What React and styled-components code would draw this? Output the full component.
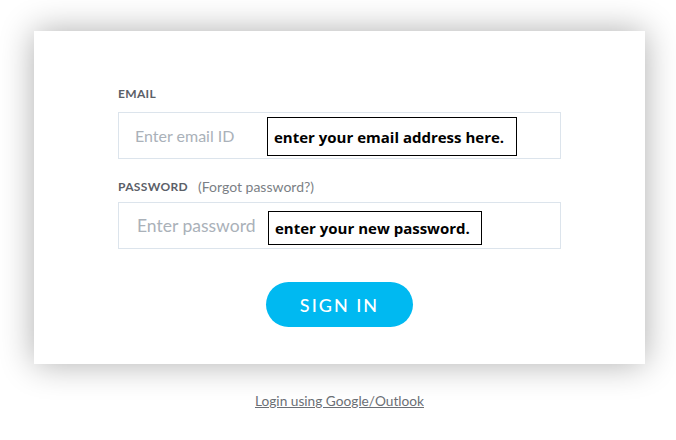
import React from "react";
import styled, { createGlobalStyle } from "styled-components";

const Global = createGlobalStyle`
  body {
    margin: 0;
    background: #fff;
    font-family: "Nunito", Lato, "Noto Sans", sans-serif;
  }
`;

const Page = styled.div`
  padding: 31px 0 0 34px;
  width: 611px;
`;

const Card = styled.div`
  width: 611px;
  height: 333px;
  box-sizing: border-box;
  padding: 52px 84px 0;
  background: #fff;
  box-shadow: 0 0 32px rgba(0, 0, 0, 0.32);
  display: flex;
  flex-direction: column;
`;

const Field = styled.div`
  display: flex;
  flex-direction: column;
  margin-top: ${(p) => p.$top || 0}px;
`;

const LabelRow = styled.div`
  display: flex;
  align-items: center;
  gap: 10px;
  height: 20px;
  margin-bottom: ${(p) => p.$gap}px;
`;

const Label = styled.span`
  font-family: Lato, "Noto Sans", sans-serif;
  font-size: 12px;
  font-weight: 700;
  color: #5b6068;
  letter-spacing: 0.35px;
`;

const Hint = styled.span`
  font-family: Lato, "Noto Sans", sans-serif;
  font-size: 14px;
  color: #7b7f85;
`;

const InputBox = styled.div`
  position: relative;
  height: 47px;
  box-sizing: border-box;
  border: 1px solid #dce4ec;
`;

const Input = styled.input`
  width: 100%;
  height: 100%;
  box-sizing: border-box;
  border: none;
  outline: none;
  padding: 0 0 0 ${(p) => p.$pad}px;
  font-family: Lato, "Noto Sans", sans-serif;
  font-size: ${(p) => p.$size}px;
  background: transparent;
  &::placeholder {
    color: #aab1b9;
  }
`;

const Note = styled.div`
  position: absolute;
  left: ${(p) => p.$left}px;
  top: ${(p) => p.$y}px;
  width: ${(p) => p.$w}px;
  height: ${(p) => p.$h}px;
  box-sizing: border-box;
  border: 1px solid #000;
  background: #fff;
  display: flex;
  align-items: center;
  padding-left: 6px;
  font-family: "Open Sans", "Noto Sans", sans-serif;
  font-weight: 700;
  font-size: 15px;
  color: #000;
  white-space: nowrap;
`;

const SignIn = styled.button`
  align-self: center;
  margin-top: 33px;
  width: 147px;
  height: 45px;
  border: none;
  border-radius: 23px;
  background: #00b9f1;
  color: #fff;
  font-family: Lato, "Noto Sans", sans-serif;
  font-size: 18px;
  font-weight: 500;
  letter-spacing: 2px;
  cursor: pointer;
`;

const Footer = styled.div`
  text-align: center;
  margin-top: 27px;
  line-height: 20px;
`;

const Link = styled.a`
  font-family: Lato, "Noto Sans", sans-serif;
  font-size: 13.7px;
  color: #6b6f75;
  text-decoration: underline;
`;

export default function App() {
  return (
    <Page>
      <Global />
      <Card>
        <Field>
          <LabelRow $gap={9}>
            <Label>EMAIL</Label>
          </LabelRow>
          <InputBox>
            <Input placeholder="Enter email ID" $pad={16} $size={16} />
            <Note $left={148} $y={4} $w={250} $h={39}>
              enter your email address here.
            </Note>
          </InputBox>
        </Field>
        <Field $top={17}>
          <LabelRow $gap={6}>
            <Label>PASSWORD</Label>
            <Hint>(Forgot password?)</Hint>
          </LabelRow>
          <InputBox>
            <Input type="password" placeholder="Enter password" $pad={18} $size={17.5} />
            <Note $left={149} $y={8} $w={214} $h={34}>
              enter your new password.
            </Note>
          </InputBox>
        </Field>
        <SignIn>SIGN IN</SignIn>
      </Card>
      <Footer>
        <Link href="#">Login using Google/Outlook</Link>
      </Footer>
    </Page>
  );
}
